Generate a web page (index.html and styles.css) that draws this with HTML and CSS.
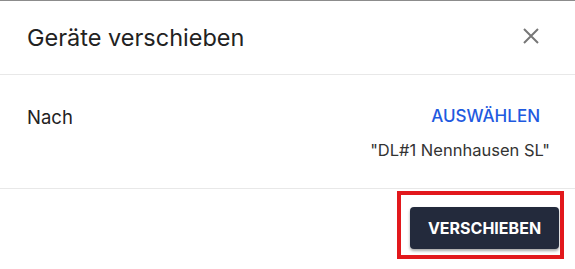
FILE: index.html
```html
<!DOCTYPE html>
<html lang="de">
<head>
    <meta charset="UTF-8">
    <meta name="viewport" content="width=device-width, initial-scale=1.0">
    <title>Geräte verschieben</title>
    <link rel="stylesheet" href="styles.css">
</head>
<body>
    <div class="dialog">
        <div class="dialog-header">
            <div class="dialog-title">Geräte verschieben</div>
            <button class="close-btn" aria-label="Schließen">
                <svg width="16" height="16" viewBox="0 0 16 16">
                    <path d="M1 1 L15 15 M15 1 L1 15" stroke="#777" stroke-width="2" fill="none"/>
                </svg>
            </button>
        </div>
        <div class="dialog-body">
            <div class="label">Nach</div>
            <div class="target">
                <button class="link-btn">AUSWÄHLEN</button>
                <div class="target-name">"DL#1 Nennhausen SL"</div>
            </div>
        </div>
        <div class="dialog-footer">
            <button class="primary-btn">VERSCHIEBEN</button>
            <!-- annotation frame around the action -->
            <div class="highlight"></div>
        </div>
    </div>
</body>
</html>
```

FILE: styles.css
```css
/* General styles */
body {
    font-family: Inter, "Noto Sans", sans-serif;
    background: #fff;
    color: #222;
    margin: 0;
    padding: 0;
}
.dialog {
    width: 575px;
    height: 269px;
    border-top: 1px solid #8c8c8c;
    box-sizing: border-box;
    overflow: hidden;
}
.dialog-header {
    height: 73px;
    display: flex;
    align-items: center;
    justify-content: space-between;
    padding: 0 36px 0 27px;
    border-bottom: 1px solid #e8e8e8;
}
.dialog-title {
    font-size: 23.5px;
    font-weight: 400;
    color: #222;
}
.close-btn {
    background: none;
    border: none;
    padding: 0;
    margin-top: -4px;
    display: flex;
    cursor: pointer;
}
.dialog-body {
    height: 114px;
    display: flex;
    justify-content: space-between;
    align-items: flex-start;
    padding: 27px 25px 0 27px;
    box-sizing: border-box;
    border-bottom: 1px solid #e8e8e8;
}
.label {
    font-size: 18.5px;
    color: #222;
    padding-top: 4px;
}
.target {
    display: flex;
    flex-direction: column;
    align-items: flex-end;
}
.link-btn {
    font-family: inherit;
    font-size: 17px;
    font-weight: 500;
    color: #1f5ae0;
    background: none;
    border: none;
    padding: 4px 10px;
    cursor: pointer;
}
.target-name {
    font-size: 16.5px;
    color: #333;
    margin-top: 10px;
}
.dialog-footer {
    position: relative;
    display: flex;
    justify-content: flex-end;
    padding: 18px 16px 0 0;
}
.primary-btn {
    font-family: inherit;
    font-size: 16px;
    font-weight: 700;
    color: #fff;
    background: #232a3c;
    border: none;
    border-radius: 4px;
    width: 149px;
    height: 42px;
    box-shadow: 0 2px 3px rgba(0, 0, 0, 0.35);
    cursor: pointer;
}
.highlight {
    position: absolute;
    left: 397px;
    top: 2px;
    width: 167px;
    height: 68px;
    border: 4px solid #e2181c;
    box-sizing: border-box;
}
```
